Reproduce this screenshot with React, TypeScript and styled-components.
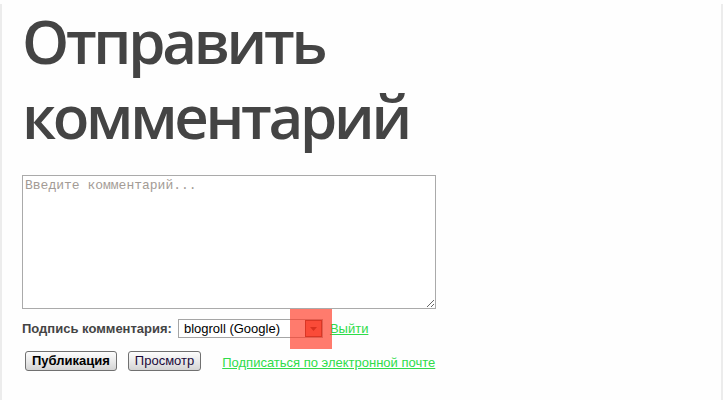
import styled, { createGlobalStyle } from "styled-components";

const GlobalStyle = createGlobalStyle`
  html, body {
    margin: 0;
    padding: 0;
    background: #fefefe;
  }
`;

const Page = styled.div`
  box-sizing: border-box;
  min-height: 400px;
  padding: 0 20px;
  border-left: 2px solid #ececec;
  border-right: 2px solid #ececec;
  font-family: "Liberation Sans", Arial, sans-serif;
`;

const Title = styled.h2`
  margin: 4px 0 0;
  font-family: "Open Sans", sans-serif;
  font-size: 60px;
  font-weight: 600;
  letter-spacing: -3.3px;
  line-height: 75px;
  color: #444;
`;

const CommentBox = styled.textarea`
  display: block;
  box-sizing: border-box;
  width: 414px;
  height: 134px;
  margin-top: 21px;
  padding: 2px;
  border: 1px solid #aaa;
  font-family: "Liberation Mono", monospace;
  font-size: 13px;
  line-height: 15px;
  resize: both;

  &::placeholder {
    color: #a39b95;
  }
`;

const SignatureRow = styled.div`
  display: flex;
  align-items: center;
  margin-top: 10px;
  height: 19px;
`;

const Label = styled.span`
  font-size: 13px;
  font-weight: bold;
  color: #444;
  margin-right: 6px;
`;

const SelectBox = styled.div`
  position: relative;
  box-sizing: border-box;
  display: flex;
  align-items: center;
  width: 145px;
  height: 19px;
  border: 1px solid #a5a5a5;
  background: #fff;
`;

const SelectValue = styled.span`
  flex: 1;
  padding-left: 5px;
  font-size: 13px;
  color: #000;
`;

const ArrowButton = styled.span`
  box-sizing: border-box;
  display: flex;
  align-items: center;
  justify-content: center;
  width: 17px;
  height: 17px;
  border: 1px solid #8a2a20;
  background: #f06a5a;
`;

const Highlight = styled.span`
  position: absolute;
  left: 111px;
  top: -11px;
  width: 42px;
  height: 40px;
  background: rgba(255, 60, 40, 0.68);
  pointer-events: none;
`;

const Link = styled.a<{ $offset?: number; $drop?: number }>`
  margin-left: ${(p) => p.$offset ?? 0}px;
  margin-top: ${(p) => p.$drop ?? 0}px;
  font-size: 13px;
  color: #2fdc4a;
  text-decoration: underline;
  cursor: pointer;
`;

const ButtonRow = styled.div`
  display: flex;
  align-items: center;
  margin-top: 13px;
  padding-left: 3px;
`;

const Button = styled.button<{ $bold?: boolean; $gap?: number }>`
  box-sizing: border-box;
  height: 20px;
  margin-right: ${(p) => p.$gap ?? 0}px;
  padding: 0 6px;
  border: 1px solid #707070;
  border-radius: 3px;
  background: linear-gradient(#fdfdfd, #e6e6e6 60%, #d4d4d4);
  font-family: "Liberation Sans", Arial, sans-serif;
  font-size: 13px;
  font-weight: ${(p) => (p.$bold ? "bold" : "normal")};
  color: ${(p) => (p.$bold ? "#000" : "#1a0a3a")};
  line-height: 16px;
`;

export default function App() {
  return (
    <Page>
      <GlobalStyle />
      <Title>
        Отправить
        <br />
        комментарий
      </Title>
      <CommentBox placeholder="Введите комментарий..." />
      <SignatureRow>
        <Label>Подпись комментария:</Label>
        <SelectBox>
          <SelectValue>blogroll (Google)</SelectValue>
          <ArrowButton>
            <svg width="7" height="4" viewBox="0 0 7 4">
              <path d="M0 0h7L3.5 4z" fill="#8a1a10" />
            </svg>
          </ArrowButton>
          <Highlight />
        </SelectBox>
        <Link $offset={7}>Выйти</Link>
      </SignatureRow>
      <ButtonRow>
        <Button $bold $gap={11}>Публикация</Button>
        <Button $gap={21}>Просмотр</Button>
        <Link $drop={2}>Подписаться по электронной почте</Link>
      </ButtonRow>
    </Page>
  );
}
